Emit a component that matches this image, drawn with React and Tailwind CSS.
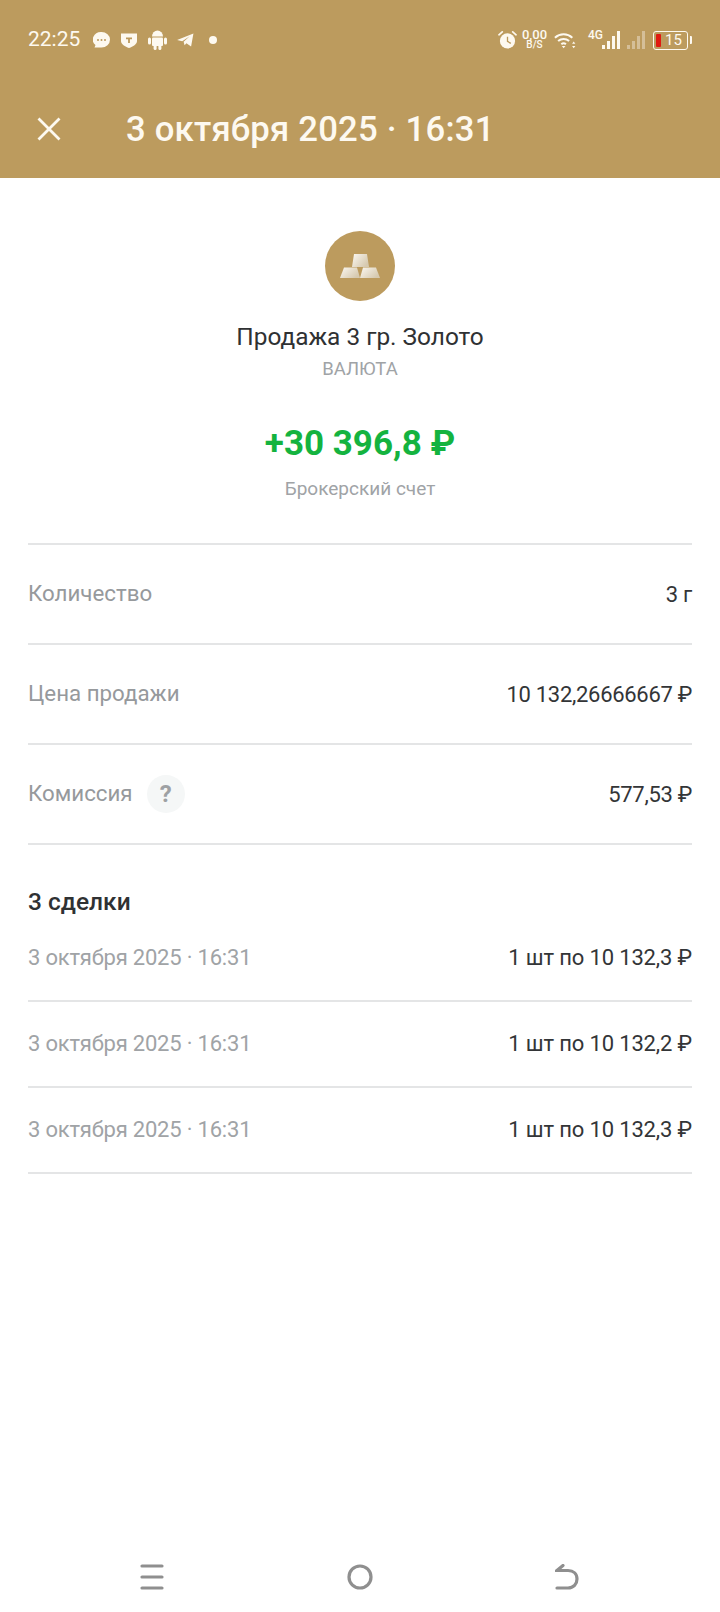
import React from "react";

const Row = ({ label, value, children }) => (
  <div className="flex h-[100px] items-center justify-between border-b-2 border-[#e4e5e6]">
    <div className="flex items-center text-[22.3px] text-[#96999c]">
      {label}
      {children}
    </div>
    <div className="text-[22px] tracking-[-0.3px] text-[#333537]">{value}</div>
  </div>
);

const Deal = ({ value }) => (
  <div className="flex h-[86px] items-center justify-between border-b-2 border-[#e4e5e6] pb-[2px]">
    <div className="text-[22px] tracking-[-0.2px] text-[#a0a3a6]">3 октября 2025 · 16:31</div>
    <div className="text-[22px] tracking-[-0.15px] text-[#333537]">{value}</div>
  </div>
);

function StatusIcons() {
  return (
    <div className="ml-[13px] flex items-center">
      {/* chat */}
      <svg width="17" height="16" viewBox="0 0 17 16">
        <path d="M8.5 0a8.5 7.5 0 0 1 8.5 7.5a8.5 8 0 0 1-8.5 8H1.5l1-2.5A8.5 7.5 0 0 1 8.5 0z" fill="#fdf9f0" />
        <circle cx="5" cy="8" r="1" fill="#bb995c" />
        <circle cx="8.5" cy="8" r="1" fill="#bb995c" />
        <circle cx="12" cy="8" r="1" fill="#bb995c" />
      </svg>
      {/* shield T */}
      <svg className="ml-[11px]" width="16" height="15" viewBox="0 0 16 15">
        <path d="M0 0.5h16v7.5c0 3.5-4 5.5-8 7c-4-1.5-8-3.5-8-7z" fill="#fdf9f0" />
        <path d="M5 4.5h6v1.8h-2.1v3.7h-1.8v-3.7h-2.1z" fill="#bb995c" />
      </svg>
      {/* android */}
      <svg className="ml-[11px]" width="19" height="20" viewBox="0 0 19 20" fill="#fdf9f0">
        <path d="M4 6.5a5.5 6 0 0 1 11 0z" />
        <rect x="4" y="7.4" width="11" height="8.6" rx="1" />
        <rect x="0" y="7.4" width="3" height="7" rx="1.5" />
        <rect x="16" y="7.4" width="3" height="7" rx="1.5" />
        <rect x="5.6" y="15" width="3" height="5" rx="1.5" />
        <rect x="10.4" y="15" width="3" height="5" rx="1.5" />
      </svg>
      {/* telegram */}
      <svg className="ml-[10px]" width="17" height="14" viewBox="0 0 18 15">
        <path d="M0 7.5L17.5 0.5L15 14.5L10 11L8 13L7 9.5L13.5 3.5L5.5 8.8z" fill="#fdf9f0" />
      </svg>
      <div className="ml-[15px] h-[8px] w-[8px] rounded-full bg-[#fdf9f0]" />
    </div>
  );
}

function Bars({ color }) {
  return (
    <div className="flex items-end gap-[2px]">
      <div className={`h-[4px] w-[3px] ${color}`} />
      <div className={`h-[8px] w-[3px] ${color}`} />
      <div className={`h-[13px] w-[3px] ${color}`} />
      <div className={`h-[18px] w-[3px] ${color}`} />
    </div>
  );
}

function SystemIcons() {
  return (
    <div className="flex items-center">
      {/* alarm */}
      <svg width="19" height="20" viewBox="0 0 20 20">
        <circle cx="10" cy="11" r="8" fill="#fdf9f0" />
        <path d="M10 6.5V11.5L13.5 13.5" stroke="#bb995c" strokeWidth="1.4" fill="none" />
        <path d="M1 4.5L4.5 1.5M19 4.5L15.5 1.5" stroke="#fdf9f0" strokeWidth="1.8" strokeLinecap="round" />
      </svg>
      <div className="ml-[6px] flex w-[23px] flex-col items-center font-medium leading-[10px] text-[#fdf9f0]">
        <span className="text-[13px]">0,00</span>
        <span className="text-[10px]">B/S</span>
      </div>
      {/* wifi */}
      <svg className="ml-[8px]" width="22" height="19" viewBox="0 0 24 19" fill="none" stroke="#fdf9f0" strokeWidth="2.2">
        <path d="M1 6.5C6.5 1.5 14.5 1.5 20 6.5" />
        <path d="M4.5 10C8 7 13 7 16.5 10" />
        <path d="M8 13.5C9.5 12.2 11.5 12.2 13 13.5" />
        <path d="M10.5 18L8.5 15.5H12.5Z" fill="#fdf9f0" stroke="none" />
        <path d="M21.5 10.5L19.7 13H23.3ZM21.5 18L19.7 15.5H23.3Z" fill="#fdf9f0" stroke="none" />
      </svg>
      {/* sim 1 */}
      <div className="relative ml-[12px] flex h-[18px] w-[32px] justify-end">
        <span className="absolute left-0 top-[-3px] text-[12px] font-medium leading-[14px] text-[#fdf9f0]">4G</span>
        <div className="self-end">
          <Bars color="bg-[#fdf9f0]" />
        </div>
      </div>
      {/* sim 2 */}
      <div className="ml-[7px] w-[19px]">
        <Bars color="bg-[#d5bf98]" />
      </div>
      {/* battery */}
      <div className="ml-[7px] flex items-center">
        <div className="flex h-[19px] w-[35px] items-center rounded-[3px] border border-[#fdf9f0] pl-[2px]">
          <div className="h-[13px] w-[5px] rounded-[1px] bg-[#e0190f]" />
          <span className="ml-[4px] text-[15px] leading-none text-[#fdf9f0]">15</span>
        </div>
        <div className="ml-[2px] h-[8px] w-[2px] rounded-r-[1px] bg-[#fdf9f0]" />
      </div>
    </div>
  );
}

export default function App() {
  return (
    <div className="flex min-h-[1612px] w-[720px] flex-col bg-white font-['Roboto',sans-serif]">
      <header className="h-[178px] bg-[#bc9b5e] px-[28px]">
        <div className="flex h-[80px] items-center justify-between">
          <div className="flex items-center">
            <span className="text-[21px] text-[#fdf9f0]">22:25</span>
            <StatusIcons />
          </div>
          <SystemIcons />
        </div>
        <div className="mt-[25px] flex h-[48px] items-center">
          <svg className="ml-[9px]" width="24" height="24" viewBox="0 0 24 24" fill="none" stroke="#fdf9f0" strokeWidth="2.8">
            <path d="M1.5 1.5L22.5 22.5M22.5 1.5L1.5 22.5" />
          </svg>
          <h1 className="ml-[65px] text-[34.7px] font-medium tracking-[0.2px] text-[#fdf9f0]">3 октября 2025 · 16:31</h1>
        </div>
      </header>

      <main className="px-[28px]">
        <div className="flex h-[367px] flex-col items-center border-b-2 border-[#e4e5e6] pt-[53px]">
          <div className="flex h-[70px] w-[70px] items-center justify-center rounded-full bg-[#bc9b5e]">
            <svg width="40" height="24" viewBox="0 0 40 24">
              <defs>
                <linearGradient id="gold" x1="0" y1="0" x2="1" y2="0.6">
                  <stop offset="0" stopColor="#fbf8f2" />
                  <stop offset="1" stopColor="#d6c9af" />
                </linearGradient>
              </defs>
              <path d="M14 0H27L29 13H12Z" fill="url(#gold)" />
              <path d="M4 13.5H17L20 24H0Z" fill="url(#gold)" />
              <path d="M23 13.5H36L40 24H20Z" fill="url(#gold)" />
            </svg>
          </div>
          <div className="mt-[20px] text-[24.4px] leading-[32px] text-[#2f3133]">Продажа 3 гр. Золото</div>
          <div className="mt-[4px] text-[18.5px] leading-[24px] text-[#a0a3a6]">ВАЛЮТА</div>
          <div className="mt-[41px] text-[35px] font-bold leading-[44px] text-[#14b33f]">+30 396,8 ₽</div>
          <div className="mt-[11px] text-[19px] leading-[24px] text-[#a0a3a6]">Брокерский счет</div>
        </div>

        <Row label="Количество" value="3 г" />
        <Row label="Цена продажи" value="10 132,26666667 ₽" />
        <Row label="Комиссия" value="577,53 ₽">
          <span className="ml-[14px] flex h-[38px] w-[38px] items-center justify-center rounded-full bg-[#f5f7f7] text-[24px] font-bold text-[#9ea1a4]">?</span>
        </Row>

        <div className="pt-[41px] text-[24.5px] font-medium leading-[32px] text-[#2f3133]">3 сделки</div>
        <div className="-mt-[2px]">
          <Deal value="1 шт по 10 132,3 ₽" />
          <Deal value="1 шт по 10 132,2 ₽" />
          <Deal value="1 шт по 10 132,3 ₽" />
        </div>
      </main>

      <nav className="mt-auto flex h-[68px] items-start justify-between pl-[140px] pr-[141px] pt-[20px]">
        <svg width="24" height="26" viewBox="0 0 24 26" stroke="#8f8f8f" strokeWidth="3.2" strokeLinecap="round">
          <path d="M2 2H22M2 13H22M2 24H22" />
        </svg>
        <svg width="26" height="26" viewBox="0 0 26 26" fill="none" stroke="#8f8f8f" strokeWidth="3.2">
          <circle cx="13" cy="13" r="11" />
        </svg>
        <svg width="24" height="26" viewBox="0 0 24 26" fill="none" stroke="#8f8f8f" strokeWidth="3.2" strokeLinecap="round">
          <path d="M8 1.5L2 6.5H13C18.5 6.5 22 10 22 15C22 20 18.5 24 13 24H2" />
        </svg>
      </nav>
    </div>
  );
}
